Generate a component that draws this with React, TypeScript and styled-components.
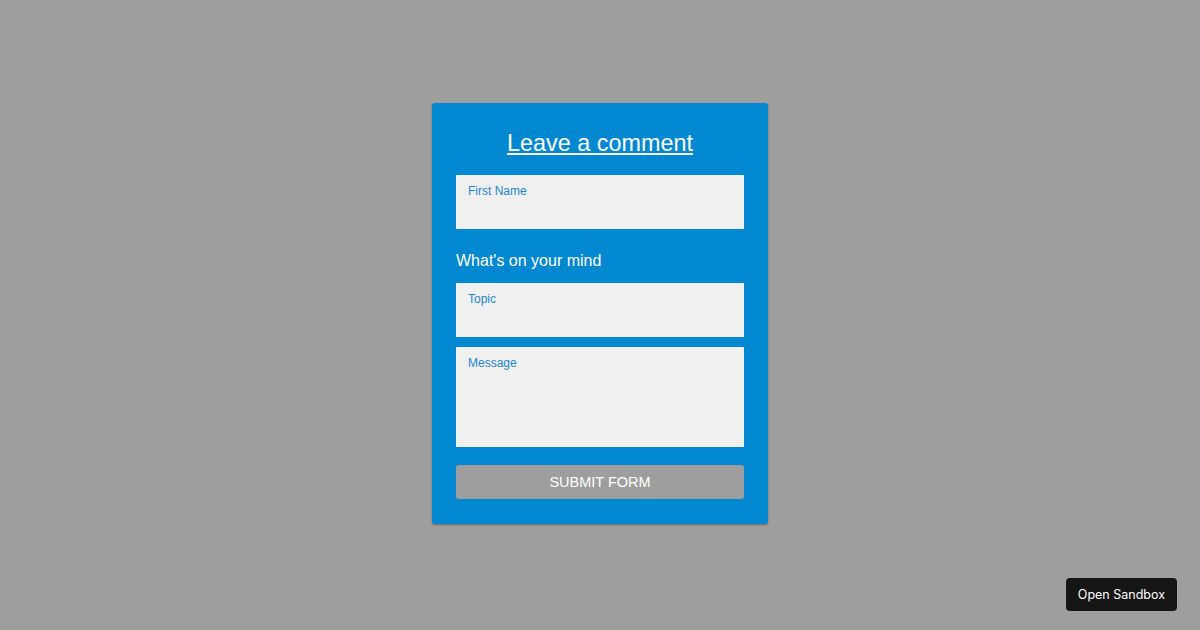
import React from "react";
import styled, { createGlobalStyle } from "styled-components";

// Global

const GlobalStyle = createGlobalStyle`
  html, body {
    margin: 0;
    padding: 0;
    height: 100%;
    background-color: #9e9e9e;
    font-family: "Liberation Sans", Arial, sans-serif;
  }
  #root {
    min-height: 100%;
  }
  * {
    box-sizing: border-box;
  }
`

// Styles

const Page = styled.div`
  width: 1200px;
  height: 630px;
  display: flex;
  justify-content: center;
  align-items: flex-start;
  padding-top: 103px;
`

const FormCard = styled.form`
  width: 336px;
  display: flex;
  flex-direction: column;
  padding: 24px 24px 25px;
  background-color: #0288d1;
  border-radius: 3px;
  box-shadow: 0 1px 2px rgba(0, 0, 0, 0.35);
`

const Title = styled.h2`
  margin: 2px 0 18px;
  font-size: 23.4px;
  line-height: 28px;
  font-weight: 400;
  color: #ffffff;
  text-align: center;
  text-decoration: underline;
  text-underline-offset: 2px;
  text-decoration-thickness: 2px;
`

const SectionTitle = styled.p`
  margin: 22px 0 12px;
  font-size: 16px;
  line-height: 20px;
  color: #ffffff;
`

const Field = styled.label<{ $height: number; $gap?: number }>`
  display: flex;
  flex-direction: column;
  height: ${(p) => p.$height}px;
  margin-bottom: ${(p) => p.$gap ?? 0}px;
  padding: 9px 12px 6px;
  background-color: #f0f0f0;
`

const FieldLabel = styled.span`
  font-size: 12px;
  line-height: 14px;
  color: #1f86d4;
`

const FieldInput = styled.input`
  flex: 1;
  min-width: 0;
  border: none;
  outline: none;
  background: transparent;
  padding: 0;
  font-family: inherit;
  font-size: 14px;
  color: #333333;
`

const FieldArea = styled.textarea`
  flex: 1;
  border: none;
  outline: none;
  resize: none;
  background: transparent;
  padding: 4px 0 0;
  font-family: inherit;
  font-size: 14px;
  color: #333333;
`

const SubmitButton = styled.button`
  height: 34px;
  margin-top: 18px;
  border: none;
  border-radius: 3px;
  background-color: #9e9e9e;
  color: #ffffff;
  font-family: inherit;
  font-size: 14.5px;
  text-transform: uppercase;
  cursor: pointer;
`

const SandboxButton = styled.a`
  position: fixed;
  right: 23px;
  bottom: 19px;
  display: flex;
  align-items: center;
  height: 33px;
  padding: 0 12px;
  border-radius: 4px;
  background-color: #151515;
  color: #ffffff;
  font-family: Inter, "Liberation Sans", sans-serif;
  font-size: 12.5px;
  text-decoration: none;
`

// Component

const App: React.FC = () => {
  const [firstName, setFirstName] = React.useState("");
  const [topic, setTopic] = React.useState("");
  const [message, setMessage] = React.useState("");

  const handleSubmit = (evt: React.FormEvent) => {
    evt.preventDefault()
  }

  return (
    <>
      <GlobalStyle />
      <Page>
        <FormCard onSubmit={handleSubmit}>
          <Title>Leave a comment</Title>
          <Field $height={54}>
            <FieldLabel>First Name</FieldLabel>
            <FieldInput
              value={firstName}
              onChange={(evt) => setFirstName(evt.target.value)}
            />
          </Field>
          <SectionTitle>What's on your mind</SectionTitle>
          <Field $height={54} $gap={10}>
            <FieldLabel>Topic</FieldLabel>
            <FieldInput
              value={topic}
              onChange={(evt) => setTopic(evt.target.value)}
            />
          </Field>
          <Field $height={100}>
            <FieldLabel>Message</FieldLabel>
            <FieldArea
              value={message}
              onChange={(evt) => setMessage(evt.target.value)}
            />
          </Field>
          <SubmitButton type="submit">Submit form</SubmitButton>
        </FormCard>
      </Page>
      <SandboxButton href="#">Open Sandbox</SandboxButton>
    </>
  )
}

export default App;
